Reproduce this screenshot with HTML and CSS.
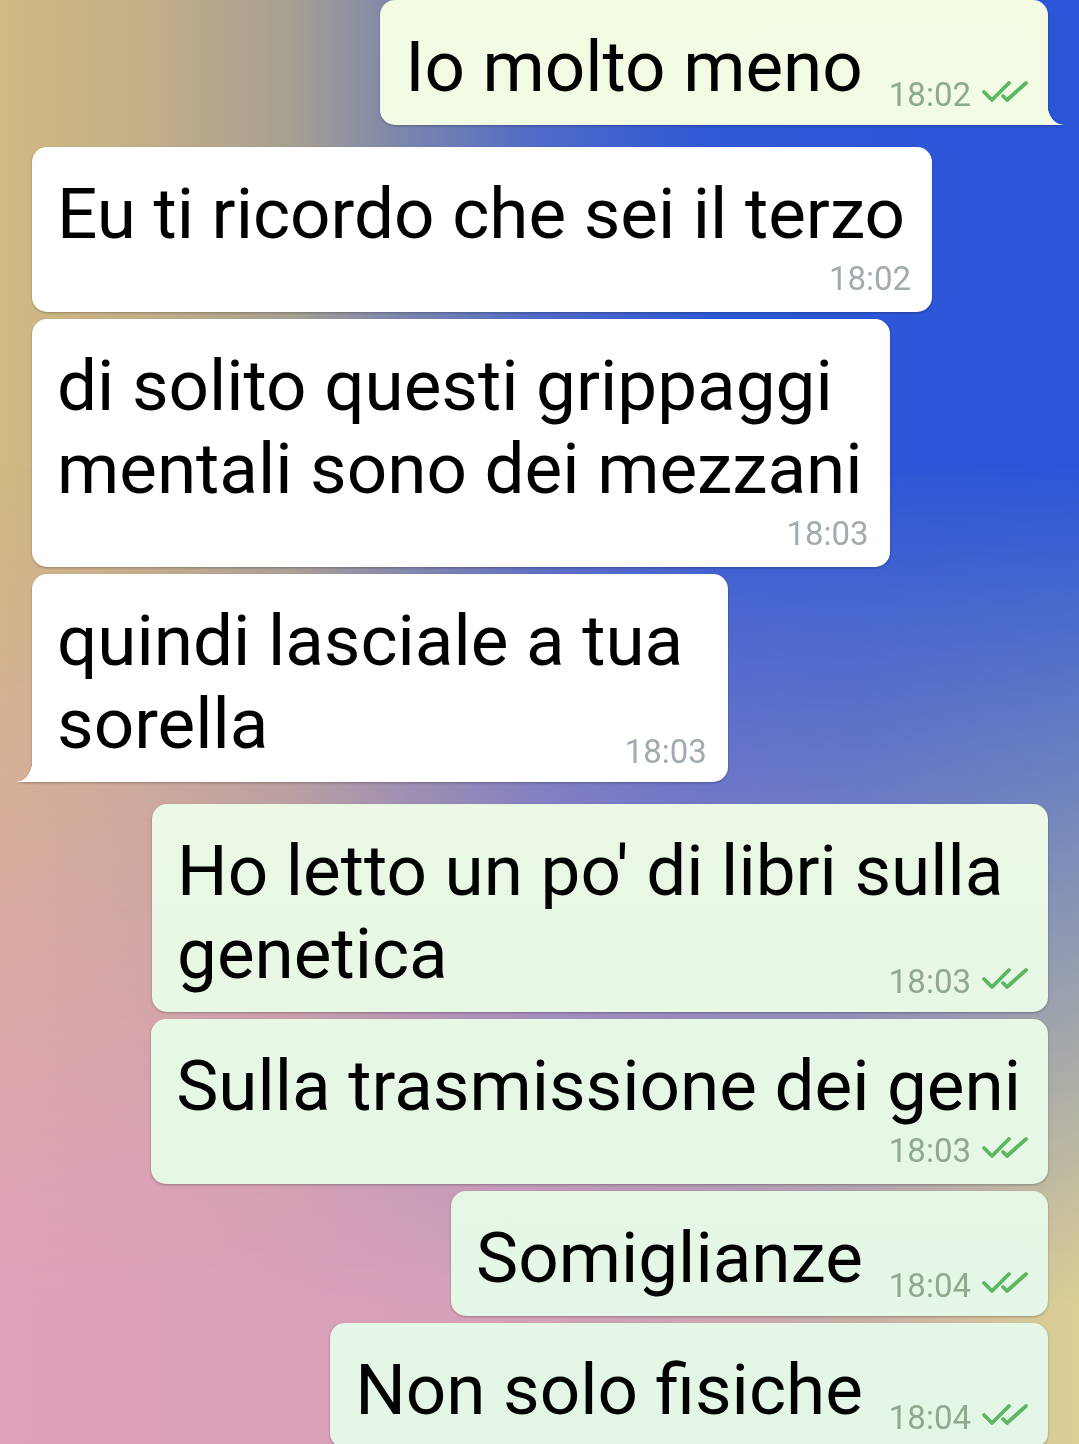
FILE: index.html
```html
<!DOCTYPE html>
<html lang="it">
<head>
  <meta charset="UTF-8">
  <meta name="viewport" content="width=device-width, initial-scale=1.0">
  <title>Chat</title>
  <link rel="stylesheet" href="styles.css">
</head>
<body>
  <main class="chat">
    <div class="group group-out">
      <div class="bubble out tail">
        <span class="text">Io molto meno</span><span class="meta">18:02<svg class="ticks" viewBox="0 0 48 24" width="48" height="24"><path d="M3 12l8 8L28 3M22 16l4 4L45 3"/></svg></span>
      </div>
    </div>

    <div class="group group-in">
      <div class="bubble in wrap">
        <span class="text">Eu ti ricordo che sei il terzo</span><span class="meta">18:02</span>
      </div>
      <div class="bubble in wrap">
        <span class="text">di solito questi grippaggi&nbsp;<br>mentali sono dei mezzani</span><span class="meta">18:03</span>
      </div>
      <div class="bubble in tail">
        <span class="text">quindi lasciale a tua&nbsp;<br>sorella</span><span class="meta">18:03</span>
      </div>
    </div>

    <div class="group group-out">
      <div class="bubble out">
        <span class="text">Ho letto un po' di libri sulla&nbsp;<br>genetica</span><span class="meta">18:03<svg class="ticks" viewBox="0 0 48 24" width="48" height="24"><path d="M3 12l8 8L28 3M22 16l4 4L45 3"/></svg></span>
      </div>
      <div class="bubble out wrap">
        <span class="text">Sulla trasmissione dei geni</span><span class="meta">18:03<svg class="ticks" viewBox="0 0 48 24" width="48" height="24"><path d="M3 12l8 8L28 3M22 16l4 4L45 3"/></svg></span>
      </div>
      <div class="bubble out">
        <span class="text">Somiglianze</span><span class="meta">18:04<svg class="ticks" viewBox="0 0 48 24" width="48" height="24"><path d="M3 12l8 8L28 3M22 16l4 4L45 3"/></svg></span>
      </div>
      <div class="bubble out">
        <span class="text">Non solo fisiche</span><span class="meta">18:04<svg class="ticks" viewBox="0 0 48 24" width="48" height="24"><path d="M3 12l8 8L28 3M22 16l4 4L45 3"/></svg></span>
      </div>
    </div>
  </main>
</body>
</html>
```

FILE: styles.css
```css
html, body {
  margin: 0;
  padding: 0;
  height: 100%;
}

body {
  font-family: Roboto, "Noto Sans", sans-serif;
  overflow: hidden;
}

/* wallpaper: top colours mixed into bottom colours */
.chat {
  position: relative;
  min-height: 100%;
  box-sizing: border-box;
  display: flex;
  flex-direction: column;
  gap: 22px;
  padding: 0 31px 0 32px;
  background: linear-gradient(to right, #d1ba82 0%, #c2ae88 14%, #a6a092 27%, #7d87ac 37%, #4f6ac8 50%, #2f58d6 66%, #2a55d8 100%);
  isolation: isolate;
}
.chat::before {
  content: "";
  position: absolute;
  inset: 0;
  z-index: -1;
  background: linear-gradient(to right, #e1a0bc 0%, #d8a0b9 35%, #cfa3b6 60%, #c8b0a8 80%, #dccf94 100%);
  -webkit-mask-image: linear-gradient(to bottom, transparent 32%, rgba(0,0,0,.45) 58%, #000 90%);
  mask-image: linear-gradient(to bottom, transparent 32%, rgba(0,0,0,.45) 58%, #000 90%);
}

.group {
  display: flex;
  flex-direction: column;
  gap: 7px;
}
.group-out {
  align-items: flex-end;
}
.group-in {
  align-items: flex-start;
}

.bubble {
  position: relative;
  display: flow-root;
  width: fit-content;
  padding: 25px 27px 14px 25px;
  border-radius: 15px;
  font-size: 71px;
  line-height: 83px;
  color: #000;
  white-space: nowrap;
  filter: drop-shadow(0 1px 1px rgba(0, 0, 0, 0.28));
}
.bubble.in {
  background: #fff;
}
.bubble.out {
  background: linear-gradient(to bottom, #f3fbe3, #e3f6e6) fixed;
}

.meta {
  float: right;
  margin: 54px -6px 0 26px;
  font-size: 33px;
  line-height: 32px;
  color: #a2abaf;
}
.out .meta {
  margin-right: -8px;
  color: #8ea98e;
}
.bubble.wrap .meta {
  float: none;
  display: block;
  text-align: right;
  margin-top: 8px;
  margin-bottom: 3px;
}

.ticks {
  margin-left: 10px;
  vertical-align: 2px;
  fill: none;
  stroke: #5bb761;
  stroke-width: 3.8;
  stroke-linecap: round;
  stroke-linejoin: round;
}

/* tails on the last bubble of a group */
.bubble.out.tail {
  border-bottom-right-radius: 0;
}
.bubble.out.tail::after {
  content: "";
  position: absolute;
  right: -15px;
  bottom: 0;
  width: 16px;
  height: 22px;
  background: radial-gradient(ellipse 16px 22px at 100% 0, transparent 96%, #f3fbe4 100%);
}
.bubble.in.tail {
  border-bottom-left-radius: 0;
}
.bubble.in.tail::after {
  content: "";
  position: absolute;
  left: -15px;
  bottom: 0;
  width: 16px;
  height: 24px;
  background: radial-gradient(ellipse 16px 24px at 0 0, transparent 96%, #fff 100%);
}
```
